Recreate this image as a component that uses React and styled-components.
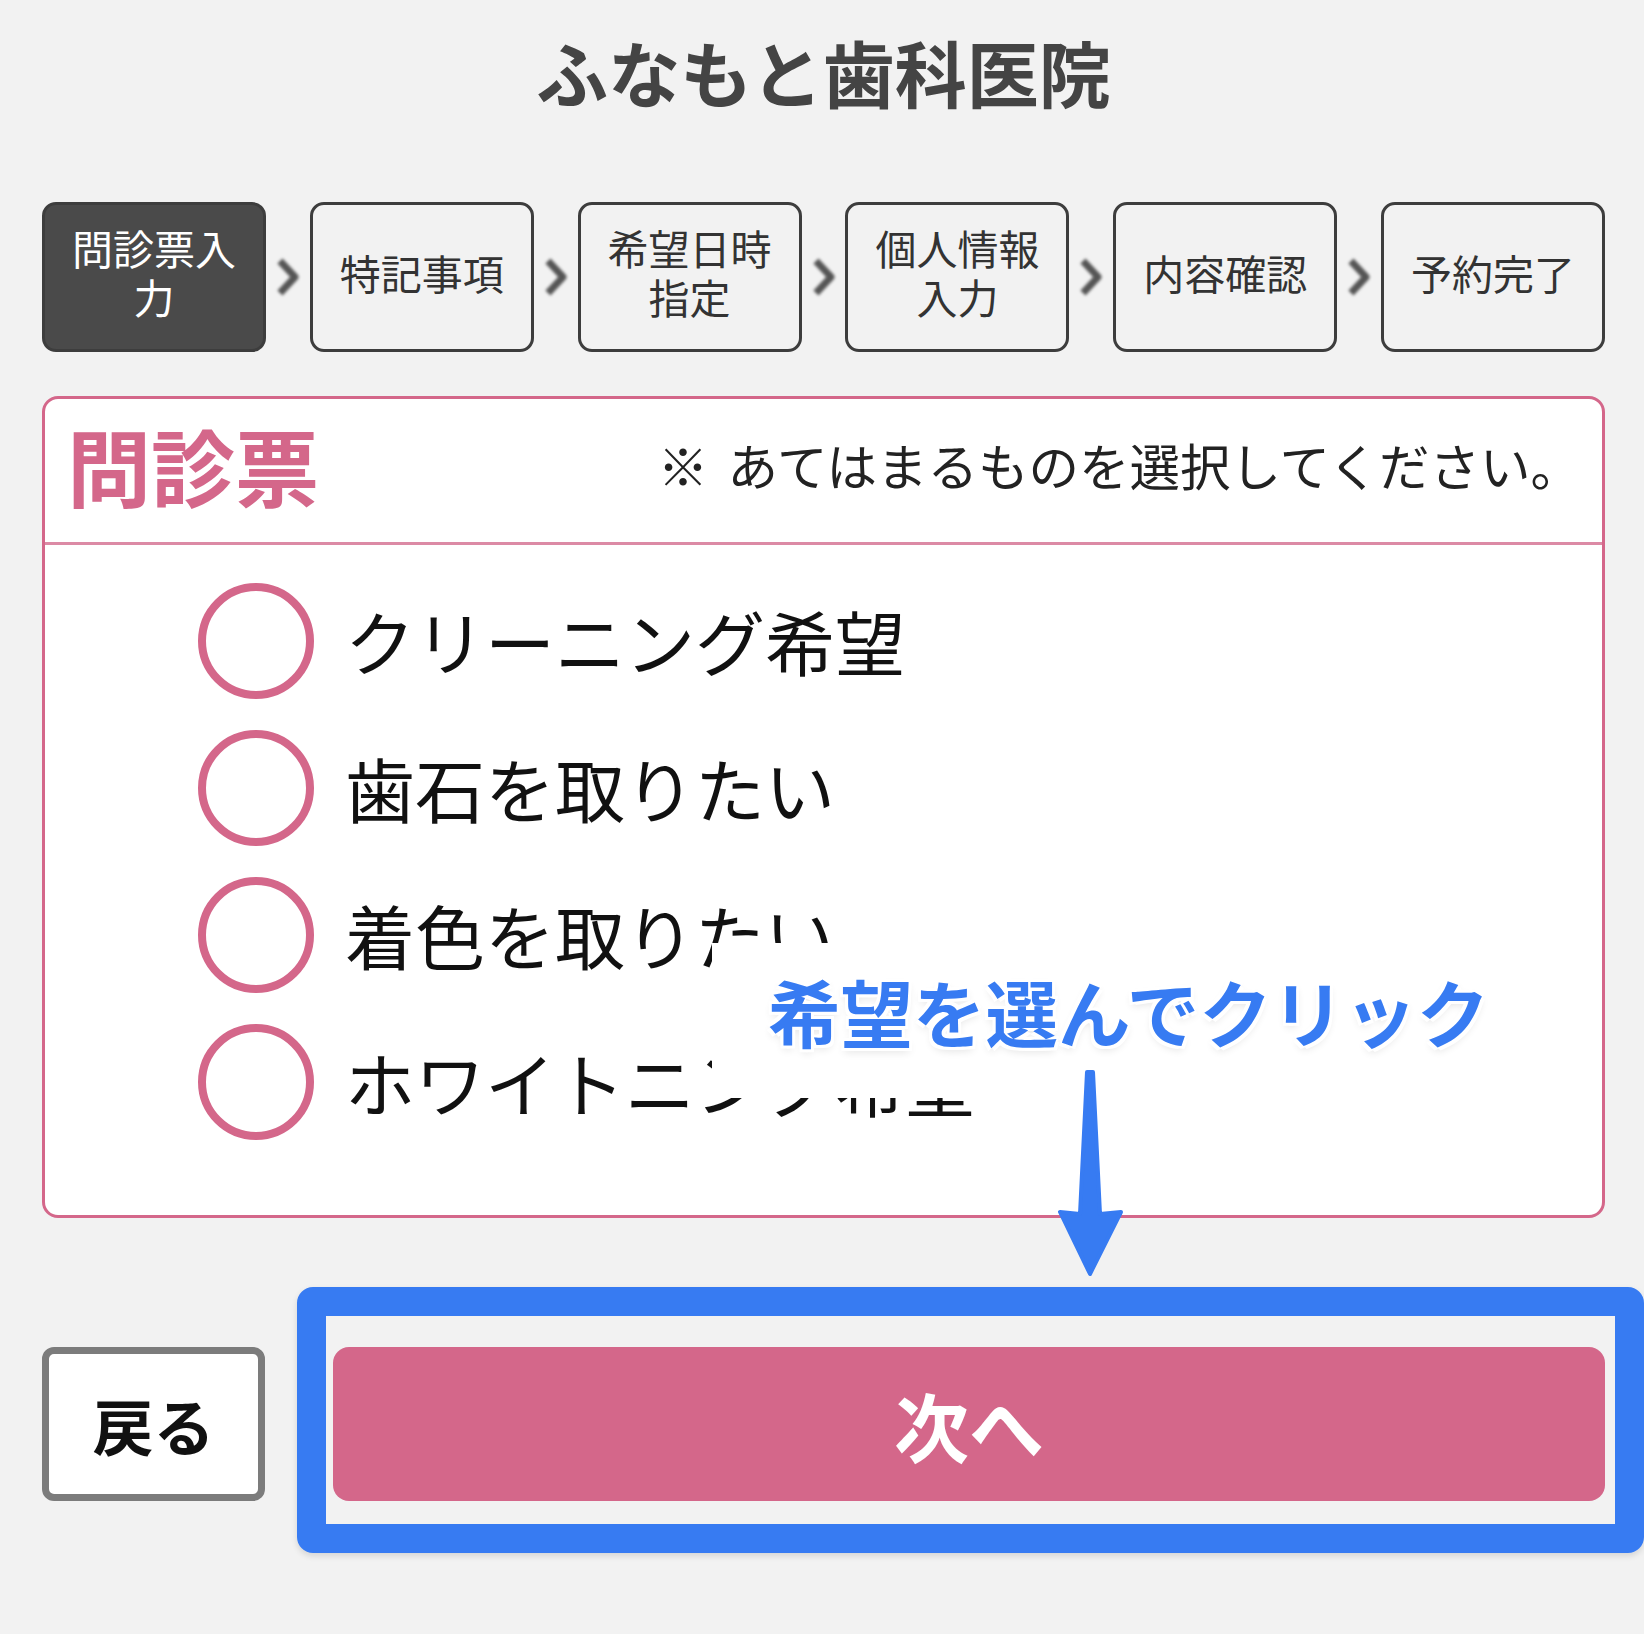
import React from 'react';
import styled, { createGlobalStyle } from 'styled-components';

const PINK = '#d4678a';
const BLUE = '#377bf2';

const steps = ['問診票入力', '特記事項', '希望日時指定', '個人情報入力', '内容確認', '予約完了'];
const options = ['クリーニング希望', '歯石を取りたい', '着色を取りたい', 'ホワイトニング希望'];

const GlobalStyle = createGlobalStyle`
    html, body {
        margin: 0;
        padding: 0;
        background: #f2f2f2;
        overflow: hidden;
    }
    body {
        font-family: "Noto Sans CJK JP", "Noto Sans", sans-serif;
        color: #222;
    }
`;

const Chevron = () => (
    <ChevronSvg viewBox="0 0 26 42" width="26" height="42">
        <polyline points="5,5 20,21 5,37" fill="none" stroke="#555" strokeWidth="7" strokeLinejoin="round" />
    </ChevronSvg>
);

const Radio = ({ label }) => (
    <OptionRow>
        <Circle />
        <OptionLabel>{label}</OptionLabel>
    </OptionRow>
);

const App = () => {
    return (
        <Page>
            <GlobalStyle />
            <ClinicName>ふなもと歯科医院</ClinicName>

            <StepBar>
                {steps.map((s, i) => (
                    <React.Fragment key={s}>
                        {i > 0 && <StepArrow><Chevron /></StepArrow>}
                        <Step $active={i === 0}>{s}</Step>
                    </React.Fragment>
                ))}
            </StepBar>

            <Card>
                <CardHeader>
                    <CardTitle>問診票</CardTitle>
                    <Note>※ あてはまるものを選択してください。</Note>
                </CardHeader>
                <OptionList>
                    {options.map((o) => <Radio key={o} label={o} />)}
                </OptionList>
            </Card>

            <ButtonRow>
                <BackButton>戻る</BackButton>
                <NextButton>次へ</NextButton>
            </ButtonRow>

            {/* callout layered on top of the form */}
            <Callout>希望を選んでクリック</Callout>
            <ArrowSvg viewBox="0 0 66 212" width="66" height="212">
                <path
                    d="M29 4 L35 4 L42 146 L63 144 L32 206 L2 144 L22 146 Z"
                    fill={BLUE}
                    stroke={BLUE}
                    strokeWidth="4"
                    strokeLinejoin="round"
                />
            </ArrowSvg>
            <HighlightFrame />
        </Page>
    );
};

export default App;

// Styled Components
const Page = styled.div`
    position: relative;
    width: 1644px;
    height: 1634px;
    box-sizing: border-box;
    padding: 35px 39px 0 42px;
`;

const ClinicName = styled.h1`
    margin: 0;
    text-align: center;
    font-size: 72px;
    line-height: 1;
    font-weight: 700;
    color: #444;
`;

const StepBar = styled.div`
    display: flex;
    align-items: center;
    margin-top: 95px;
`;

const Step = styled.div`
    width: 224px;
    height: 150px;
    box-sizing: border-box;
    display: flex;
    align-items: center;
    justify-content: center;
    padding: 0 10px 10px;
    border: 3px solid #3d3d3d;
    border-radius: 14px;
    background: ${(p) => (p.$active ? '#4a4a4a' : 'transparent')};
    color: ${(p) => (p.$active ? '#fff' : '#333')};
    font-size: 41px;
    line-height: 49px;
    text-align: center;
`;

const StepArrow = styled.div`
    width: 44px;
    display: flex;
    justify-content: center;
`;

const ChevronSvg = styled.svg`
    display: block;
    filter: blur(1.6px);
`;

const Card = styled.section`
    margin-top: 44px;
    background: #fff;
    border: 3px solid ${PINK};
    border-radius: 16px;
    overflow: hidden;
`;

const CardHeader = styled.header`
    height: 146px;
    box-sizing: border-box;
    display: flex;
    align-items: center;
    justify-content: space-between;
    padding: 0 21px 12px 22px;
    border-bottom: 3px solid #dc8aa5;
`;

const CardTitle = styled.h2`
    margin: 0;
    font-size: 84px;
    line-height: 1;
    font-weight: 700;
    color: ${PINK};
`;

const Note = styled.p`
    margin: 0;
    font-size: 50.5px;
    line-height: 1;
    word-spacing: 8px;
    color: #222;
`;

const OptionList = styled.div`
    padding: 22px 0 60px 153px;
`;

const OptionRow = styled.label`
    display: flex;
    align-items: center;
    height: 147px;
`;

const Circle = styled.span`
    width: 116px;
    height: 116px;
    box-sizing: border-box;
    border: 8px solid ${PINK};
    border-radius: 50%;
    flex-shrink: 0;
`;

const OptionLabel = styled.span`
    margin-left: 31px;
    font-size: 70px;
    line-height: 1;
    color: #111;
`;

const ButtonRow = styled.div`
    display: flex;
    gap: 68px;
    margin-top: 129px;
`;

const BackButton = styled.button`
    width: 223px;
    height: 154px;
    box-sizing: border-box;
    border: 7px solid #7c7c7c;
    border-radius: 12px;
    background: #fff;
    font-family: inherit;
    font-size: 61px;
    font-weight: 700;
    color: #111;
    padding: 0;
`;

const NextButton = styled.button`
    flex: 1;
    height: 154px;
    border: none;
    border-radius: 16px;
    background: ${PINK};
    font-family: inherit;
    font-size: 75px;
    font-weight: 700;
    color: #fff;
    padding: 0;
`;

const Callout = styled.div`
    position: absolute;
    left: 712px;
    top: 943px;
    width: 790px;
    height: 155px;
    box-sizing: border-box;
    padding: 32px 0 0 56px;
    background: #fff;
    font-size: 72.5px;
    line-height: 1;
    font-weight: 700;
    color: ${BLUE};
    white-space: nowrap;
    text-shadow:
        0 0 2px #fff, 3px 3px 0 #fff, -3px -3px 0 #fff, 3px -3px 0 #fff, -3px 3px 0 #fff,
        0 4px 8px rgba(0, 0, 0, 0.12);
`;

const ArrowSvg = styled.svg`
    position: absolute;
    left: 1058px;
    top: 1068px;
    display: block;
`;

const HighlightFrame = styled.div`
    position: absolute;
    left: 297px;
    top: 1287px;
    width: 1347px;
    height: 266px;
    box-sizing: border-box;
    border: 29px solid ${BLUE};
    border-radius: 16px;
    box-shadow: 0 3px 6px rgba(0, 0, 0, 0.12);
`;
